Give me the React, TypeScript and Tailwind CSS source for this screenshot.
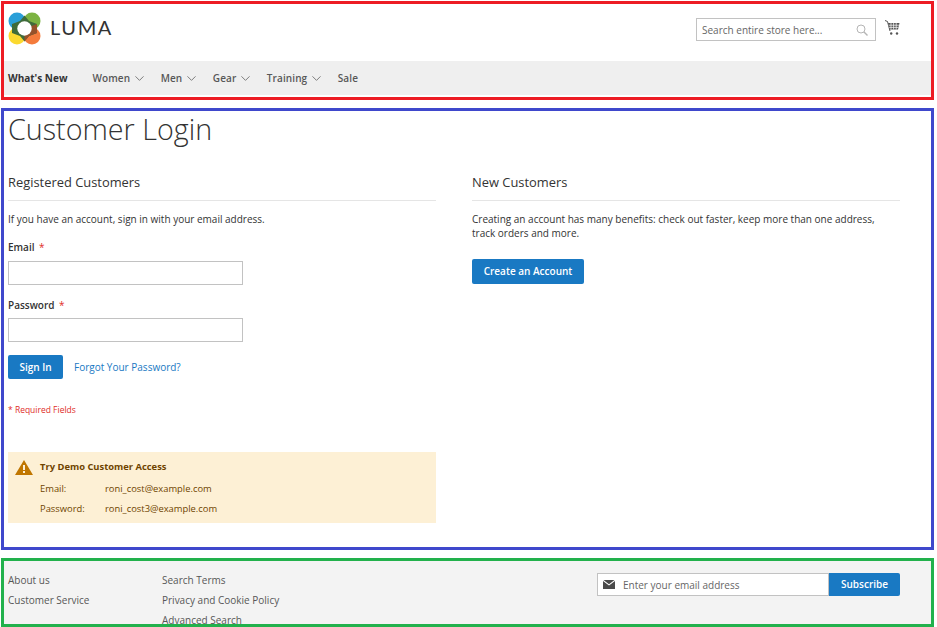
import { ChevronDown } from "lucide-react";

const navItems = [
  { label: "Women", hasMenu: true },
  { label: "Men", hasMenu: true },
  { label: "Gear", hasMenu: true },
  { label: "Training", hasMenu: true },
  { label: "Sale", hasMenu: false },
];

function LumaLogo() {
  return (
    <svg width="33" height="33" viewBox="0 0 33 33" className="shrink-0">
      <circle cx="9" cy="9" r="8.5" fill="#2a9fd8" />
      <circle cx="24" cy="9" r="8.5" fill="#7cb342" />
      <circle cx="9" cy="24" r="8.5" fill="#fbd92f" />
      <circle cx="24" cy="24" r="8.5" fill="#f47b3c" />
      <path d="M16.5 3.5 L21 9 L29 12 L29 21 L21 24 L16.5 29.5 L12 24 L4 21 L4 12 L12 9 Z" fill="#3f6b3a" />
      <path d="M16.5 16.5 L29 12 L29 21 L21 24 L16.5 29.5 Z" fill="#96512a" />
      <circle cx="16.5" cy="16.5" r="7.2" fill="#fff" />
    </svg>
  );
}

function CartIcon() {
  return (
    <svg width="17" height="17" viewBox="0 0 17 17" fill="none">
      <path d="M1 1.5 L3.5 2.5 L6 12" stroke="#555" strokeWidth="1" />
      <path d="M4 4 H15.5 L14 10.5 H5.8 Z" fill="#555" />
      <path d="M4.6 6.2 H15 M5.2 8.4 H14.5 M7 4 V10.5 M9.6 4 V10.5 M12.2 4 V10.5" stroke="#fff" strokeWidth="0.7" />
      <circle cx="7.2" cy="14.5" r="1.2" fill="#555" />
      <circle cx="13" cy="14.5" r="1.2" fill="#555" />
    </svg>
  );
}

function SearchIcon() {
  return (
    <svg width="12" height="12" viewBox="0 0 12 12" fill="none" stroke="#b5b5b5" strokeWidth="1">
      <circle cx="5" cy="5" r="4" />
      <path d="M8 8 L11.5 11.5" strokeWidth="1.4" />
    </svg>
  );
}

function MailIcon() {
  return (
    <svg width="12" height="9" viewBox="0 0 12 9" className="shrink-0">
      <path d="M0.5 0 H11.5 L6 4.3 Z" fill="#4a4a4a" />
      <path d="M0 1 L6 5.6 L12 1 V9 H0 Z" fill="#4a4a4a" />
    </svg>
  );
}

function WarningIcon() {
  return (
    <svg width="18" height="15" viewBox="0 0 18 15" className="shrink-0">
      <path d="M9 0 L18 15 H0 Z" fill="#c07600" />
      <rect x="8" y="5" width="2" height="5" fill="#fdf0d5" />
      <rect x="8" y="11" width="2" height="2" fill="#fdf0d5" />
    </svg>
  );
}

function FieldLabel({ text }: { text: string }) {
  return (
    <label className="block text-[10px] font-semibold leading-[14px] text-[#333]">
      {text} <span className="ml-0.5 font-normal text-[#e02b27]">*</span>
    </label>
  );
}

export default function App() {
  return (
    <div className="h-[627px] w-[937px] overflow-hidden bg-white pl-px pt-px font-['Open_Sans',sans-serif] text-[#333]">
      <header className="h-[99px] w-[933px] border-[3px] border-[#ed1c24]">
        <div className="flex h-[57px] items-start justify-between">
          <div className="mt-[8px] ml-[4px] flex items-center gap-[9px]">
            <LumaLogo />
            <span className="mb-[3px] font-['Lato',sans-serif] text-[20px] leading-none tracking-[1.6px] text-[#333]">LUMA</span>
          </div>
          <div className="mt-[14px] mr-[30px] flex items-start gap-[8px]">
            <div className="flex h-[23px] w-[180px] items-center justify-between border border-[#c2c2c2] pr-[7px] pl-[5px]">
              <span className="mt-[1px] text-[10px] text-[#666]">Search entire store here...</span>
              <SearchIcon />
            </div>
            <div className="mt-[1px]">
              <CartIcon />
            </div>
          </div>
        </div>
        <nav className="flex h-[34px] items-center bg-[#efefef] pl-[4px] text-[10px] font-semibold">
          <span className="mr-[25px] font-bold text-[#333]">What's New</span>
          {navItems.map((item) => (
            <span key={item.label} className="mr-[13.5px] flex items-center gap-[2px] tracking-[0.1px] text-[#575757]">
              {item.label}
              {item.hasMenu && <ChevronDown size={15} strokeWidth={1.2} className="text-[#555]" />}
            </span>
          ))}
        </nav>
      </header>

      <main className="mt-[8px] h-[442px] w-[933px] border-[3px] border-[#3f48cc] px-[4px]">
        <h1 className="text-[28.7px] font-light leading-[36px] text-[#333]">Customer Login</h1>
        <div className="mt-[26px] flex gap-[36px]">
          <section className="w-[428px]">
            <h2 className="border-b border-[#e5e5e5] pb-[8px] text-[12.9px] leading-[19px] text-[#333]">Registered Customers</h2>
            <p className="mt-[11px] text-[10px] leading-[14px]">If you have an account, sign in with your email address.</p>
            <div className="mt-[14px]">
              <FieldLabel text="Email" />
              <div className="mt-[7px] h-[24px] w-[235px] border border-[#c2c2c2] bg-white" />
            </div>
            <div className="mt-[13px]">
              <FieldLabel text="Password" />
              <div className="mt-[6px] h-[24px] w-[235px] border border-[#c2c2c2] bg-white" />
            </div>
            <div className="mt-[13px] flex items-center gap-[11px]">
              <button className="h-[24px] w-[55px] rounded-[2px] bg-[#1979c3] text-[10px] font-semibold text-white">Sign In</button>
              <a className="text-[10px] text-[#1979c3]">Forgot Your Password?</a>
            </div>
            <p className="mt-[25px] text-[8.5px] leading-[12px] text-[#e02b27]">* Required Fields</p>
            <div className="mt-[36px] h-[71px] bg-[#fdf0d5] pt-[8px] pl-[7px] text-[9.4px] text-[#6f4400]">
              <div className="flex items-center gap-[7px]">
                <WarningIcon />
                <span className="text-[9.4px] font-bold">Try Demo Customer Access</span>
              </div>
              <div className="mt-[7px] ml-[25px] flex leading-[14px]">
                <span className="w-[65px]">Email:</span>
                <span>roni_cost@example.com</span>
              </div>
              <div className="mt-[6px] ml-[25px] flex leading-[14px]">
                <span className="w-[65px]">Password:</span>
                <span>roni_cost3@example.com</span>
              </div>
            </div>
          </section>
          <section className="w-[428px]">
            <h2 className="border-b border-[#e5e5e5] pb-[8px] text-[12.9px] leading-[19px] text-[#333]">New Customers</h2>
            <p className="mt-[11px] text-[10px] leading-[14px]">
              Creating an account has many benefits: check out faster, keep more than one address,
              <br />
              track orders and more.
            </p>
            <button className="mt-[19px] h-[25px] w-[112px] rounded-[2px] bg-[#1979c3] text-[10px] font-semibold text-white">Create an Account</button>
          </section>
        </div>
      </main>

      <footer className="mt-[8px] flex h-[69px] w-[933px] overflow-hidden border-[3px] border-[#22b14c] bg-[#f3f3f3] pl-[4px] text-[10px] text-[#575757]">
        <ul className="mt-[12px] w-[154px] leading-[14px]">
          <li>About us</li>
          <li className="mt-[6px]">Customer Service</li>
        </ul>
        <ul className="mt-[12px] w-[435px] leading-[14px]">
          <li>Search Terms</li>
          <li className="mt-[6px]">Privacy and Cookie Policy</li>
          <li className="mt-[6px]">Advanced Search</li>
        </ul>
        <div className="mt-[12px] flex h-[23px]">
          <div className="flex w-[232px] items-center gap-[8px] border border-[#c2c2c2] bg-white pl-[5px]">
            <MailIcon />
            <span className="mt-[1px] text-[#666]">Enter your email address</span>
          </div>
          <button className="w-[71px] rounded-r-[2px] bg-[#1979c3] font-semibold text-white">Subscribe</button>
        </div>
      </footer>
    </div>
  );
}
